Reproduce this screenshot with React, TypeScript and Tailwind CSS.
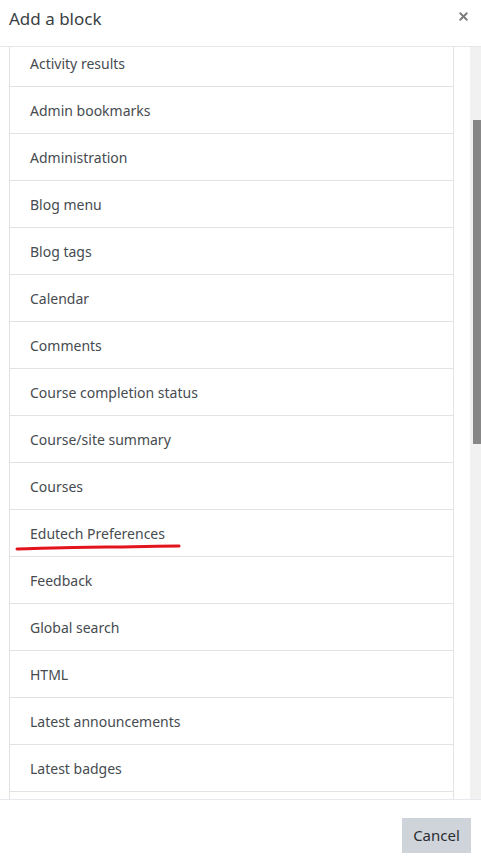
import { X } from 'lucide-react';

const BLOCKS = [
  'Activity results',
  'Admin bookmarks',
  'Administration',
  'Blog menu',
  'Blog tags',
  'Calendar',
  'Comments',
  'Course completion status',
  'Course/site summary',
  'Courses',
  'Edutech Preferences',
  'Feedback',
  'Global search',
  'HTML',
  'Latest announcements',
  'Latest badges',
  '',
];

function RedUnderline() {
  return (
    <svg className="absolute left-[5px] top-[32px]" width="168" height="10" viewBox="0 0 168 10">
      <path d="M2 7 C 40 6, 70 5, 92 5 S 145 4, 164 4" fill="none" stroke="#e3131b" strokeWidth="3" strokeLinecap="round" />
    </svg>
  );
}

export default function App() {
  return (
    <div className="w-[481px] h-[864px] bg-white flex flex-col overflow-hidden font-['Noto_Sans',sans-serif] text-[#1d2125]">
      {/* Header */}
      <div className="h-[47px] shrink-0 flex items-center justify-between pl-[9px] pr-[12px] border-b border-[#e5e7ea]">
        <h5 className="text-[17px] text-[#3a3f44] leading-none -mt-[9px]">Add a block</h5>
        <X className="size-[13px] text-[#7a7a7a] -mt-[14px] -mr-[1px]" strokeWidth={3.5} />
      </div>

      {/* Body */}
      <div className="flex flex-1 min-h-0">
        <div className="flex-1 overflow-hidden pl-[9px] pr-[16px]">
          <ul className="-mt-[7px] border-l border-r border-[#e3e3e3]">
            {BLOCKS.map((name, i) => (
              <li
                key={i}
                className="relative h-[47px] flex items-center pl-[20px] border-b border-[#e3e3e3] text-[14px] text-[#464b50]"
              >
                {name}
                {name === 'Edutech Preferences' ? <RedUnderline /> : null}
              </li>
            ))}
          </ul>
        </div>
        {/* Scrollbar */}
        <div className="w-[11px] shrink-0 bg-[#f1f1f1] pl-[3px] pt-[73px]">
          <div className="h-[324px] bg-[#878787]" />
        </div>
      </div>

      {/* Footer */}
      <div className="h-[65px] shrink-0 border-t border-[#e6e9ed] flex items-center justify-end pr-[10px]">
        <button className="h-[35px] w-[69px] bg-[#ced4da] text-[15px] text-[#2a2e32] mt-[6px]">Cancel</button>
      </div>
    </div>
  );
}
